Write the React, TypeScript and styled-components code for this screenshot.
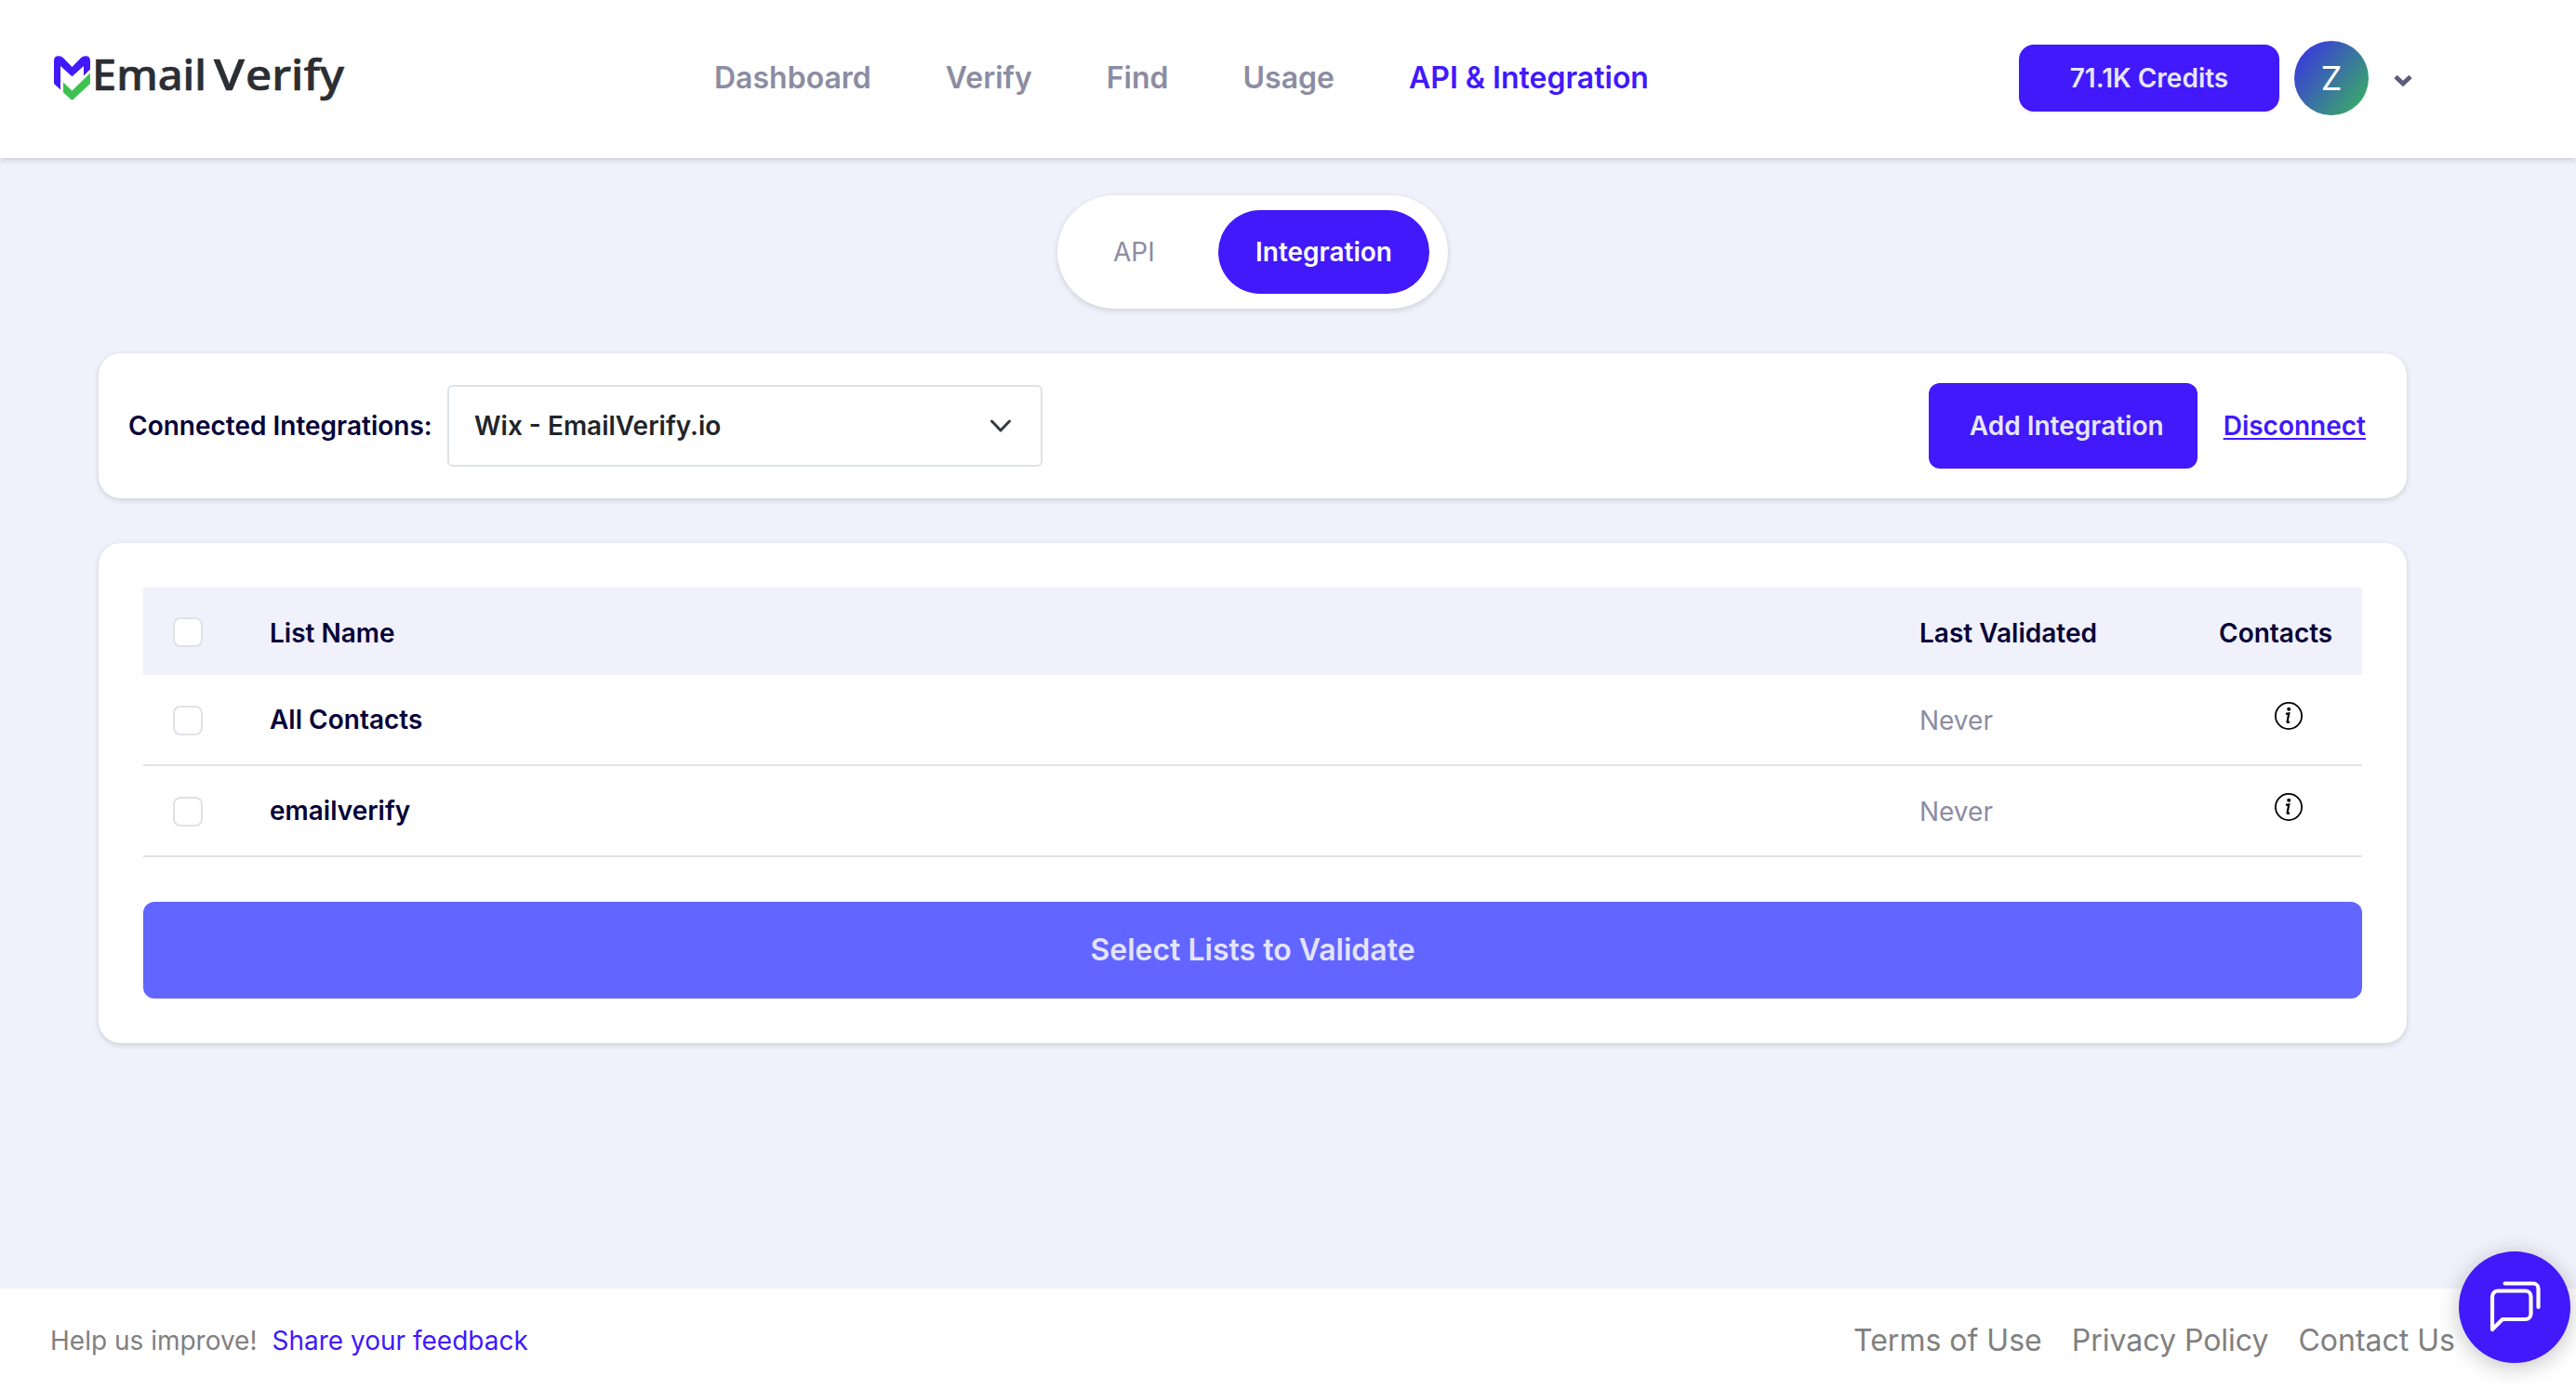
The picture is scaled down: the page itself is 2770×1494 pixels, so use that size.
import React from 'react';
import styled, { createGlobalStyle } from 'styled-components';

const Global = createGlobalStyle`
  * { box-sizing: border-box; }
  body { margin: 0; background: #f1f1fb; font-family: Inter, "Liberation Sans", sans-serif; font-size: 28px; color: #050038; }
  a { color: inherit; text-decoration: none; }
  button { font: inherit; border: 0; }
`;

const brand = '#4119fb';

const Page = styled.div`
  display: flex; flex-direction: column; min-height: 1494px; width: 2770px; background: #f1f1fb;
`;
const Header = styled.header`
  display: flex; align-items: center; height: 170px; padding: 0 175px 2px 58px; background: #fff;
  box-shadow: 0 2px 6px rgba(3, 2, 41, 0.17);
`;
const Logo = styled.svg`display: block; flex: none; width: 330px; height: 80px; margin-right: 380px; overflow: visible;`;
const Nav = styled.nav`display: flex; gap: 80px;`;
const NavLink = styled.a<{ $active?: boolean }>`
  font-size: 32px; line-height: 48px; font-weight: 600; white-space: nowrap;
  color: ${p => (p.$active ? brand : '#8c8ca2')};
`;
const Account = styled.div`display: flex; align-items: center; margin-left: auto;`;
const Chevron = styled.svg`display: block; margin-top: 5px;`;
const Credits = styled.button`
  width: 280px; height: 72px; border-radius: 16px; background: ${brand}; color: #e7e6fb; font-weight: 600;
  box-shadow: 0 2px 4px rgba(67, 24, 255, 0.06);
`;
const Avatar = styled.div`
  display: grid; place-items: center; width: 80px; height: 80px; margin: 0 26px 0 16px; border-radius: 50%;
  background: linear-gradient(128deg, #3a36e0 8%, #3aa76b 88%); color: #fff; font-size: 36px;
`;
const Main = styled.main`
  flex: 1; display: flex; flex-direction: column; align-items: center; padding: 40px 182px 0 106px;
`;
const Toggle = styled.div`
  display: flex; align-items: center; justify-content: space-between; width: 420px; height: 122px; padding: 16px 20px;
  border-radius: 61px; background: #fff; box-shadow: 0 2px 6px rgba(3, 2, 41, 0.15);
`;
const Tab = styled.button<{ $active?: boolean }>`
  height: 90px; padding: 0 40px; border-radius: 45px;
  width: ${p => (p.$active ? '227px' : '124px')};
  background: ${p => (p.$active ? brand : 'transparent')};
  color: ${p => (p.$active ? '#fff' : '#8c8ca2')};
  font-weight: ${p => (p.$active ? 600 : 400)};
`;
const Card = styled.section`
  width: 100%; margin-top: 48px; border-radius: 24px; background: #fff; box-shadow: 0 2px 6px rgba(3, 2, 41, 0.15);
`;
const Toolbar = styled(Card)`display: flex; align-items: center; height: 156px; padding: 0 44px 0 32px;`;
const Label = styled.label`font-weight: 600; white-space: nowrap; width: 343px;`;
const Select = styled.div`
  display: flex; align-items: center; justify-content: space-between; width: 640px; height: 88px; padding: 0 31px 0 27px;
  border: 2px solid #dee2e6; border-radius: 6px; color: #212529; font-weight: 600;
`;
const AddButton = styled.button`
  width: 289px; height: 92px; margin-left: auto; padding: 0 0 0 8px; border-radius: 12px; background: ${brand}; color: #e7e6fb; font-weight: 600;
`;
const Disconnect = styled.a`
  margin-left: 28px; color: ${brand}; font-weight: 600; text-decoration: underline; text-decoration-thickness: 2px; text-underline-offset: 3px;
`;
const ListCard = styled(Card)`height: 538px; padding: 48px;`;
const Row = styled.div<{ $head?: boolean }>`
  display: grid; grid-template-columns: 136px 1fr 322px 154px; align-items: center;
  height: ${p => (p.$head ? '94px' : '98px')};
  background: ${p => (p.$head ? '#f1f1fb' : '#fff')};
  border-bottom: ${p => (p.$head ? '0' : '2px solid #dee2e6')};
`;
const Check = styled.span`
  width: 32px; height: 32px; margin: 2px 0 0 32px; border: 2px solid #dee2e6; border-radius: 8px; background: #fff;
`;
const Strong = styled.span<{ $drop?: number }>`font-weight: 600; padding-top: ${p => p.$drop || 0}px;`;
const Muted = styled.span`color: #8c8ca2; padding-top: 2px;`;
const InfoCell = styled.span`display: flex; padding: 0 0 8px 59px;`;
const Validate = styled.button`
  width: 100%; height: 104px; margin-top: 48px; padding: 0 0 2px; border-radius: 12px; background: #6265ff; color: #e4e3fc; font-size: 32px; font-weight: 600;
`;
const Footer = styled.footer`
  display: flex; align-items: center; justify-content: space-between; height: 108px; padding: 4px 130px 0 54px; background: #fff; color: #808080;
`;
const Feedback = styled.a`color: ${brand}; margin-left: 16px;`;
const Legal = styled.nav`display: flex; gap: 32px; font-size: 32px; padding-bottom: 2px;`;
const Chat = styled.button`
  position: fixed; right: 6px; bottom: 28px; display: grid; place-items: center; width: 120px; height: 120px; padding: 0;
  border-radius: 50%; background: ${brand}; box-shadow: 0 4px 24px rgba(0, 0, 0, 0.24);
`;

const rows = ['All Contacts', 'emailverify'];

const InfoIcon = () => (
  <svg width="32" height="32" viewBox="0 0 32 32">
    <circle cx="16" cy="16" r="14.1" fill="none" stroke="#000" strokeWidth="1.8" />
    <circle cx="16.2" cy="8.800" r="2" fill="#000" />
    <path d="M13 13.900l3.300-.6-1.700 8.800c-.2 1.100.6 1.200 2.300.2" fill="none" stroke="#000" strokeWidth="2.200" />
  </svg>
);

export default function App() {
  return (
    <Page>
      <Global />
      <Header>
        <Logo viewBox="0 -10 330 80">
          <path fill={brand} d="M0 11.500Q0 6.300 5 6.300Q8 6.300 10 8.300L19.500 18L29 8.300Q31 6.300 34 6.300Q39 6.300 39 11.500V20.500L32 27.500V17L19.500 28.300L7 17V42.500L0 36Z" />
          <path fill="#3fc14f" d="M10 34.500L19.500 43.500L39 24.500V36L19.500 54L10 45.500Z" />
          <g fill="#2b2e33" stroke="#2b2e33" strokeWidth="0.7" fontFamily='"Noto Sans", sans-serif' fontSize="46" fontWeight="500">
            <text x="41" y="42.700" textLength="123" lengthAdjust="spacingAndGlyphs">Email</text>
            <text x="172" y="42.700" textLength="33" lengthAdjust="spacingAndGlyphs">V</text>
            <text x="206" y="42.700" textLength="106" lengthAdjust="spacingAndGlyphs">erify</text>
          </g>
        </Logo>
        <Nav>
          <NavLink>Dashboard</NavLink>
          <NavLink>Verify</NavLink>
          <NavLink>Find</NavLink>
          <NavLink>Usage</NavLink>
          <NavLink $active>API &amp; Integration</NavLink>
        </Nav>
        <Account>
          <Credits>71.1K Credits</Credits>
          <Avatar>Z</Avatar>
          <Chevron width="22" height="16" viewBox="0 0 22 16"><path d="M3 3.500l8 7.500 8-7.500" fill="none" stroke="#5b5b7b" strokeWidth="4.800" /></Chevron>
        </Account>
      </Header>
      <Main>
        <Toggle>
          <Tab>API</Tab>
          <Tab $active>Integration</Tab>
        </Toggle>
        <Toolbar>
          <Label>Connected Integrations:</Label>
          <Select>
            Wix - EmailVerify.io
            <svg width="24" height="16" viewBox="0 0 24 16"><path d="M2.500 3l9.500 10 9.500-10" fill="none" stroke="#343a40" strokeWidth="3" strokeLinecap="round" strokeLinejoin="round" /></svg>
          </Select>
          <AddButton>Add Integration</AddButton>
          <Disconnect>Disconnect</Disconnect>
        </Toolbar>
        <ListCard>
          <Row $head>
            <Check /><Strong $drop={3}>List Name</Strong><Strong $drop={3}>Last Validated</Strong><Strong $drop={3}>Contacts</Strong>
          </Row>
          {rows.map(name => (
            <Row key={name}>
              <Check /><Strong>{name}</Strong><Muted>Never</Muted><InfoCell><InfoIcon /></InfoCell>
            </Row>
          ))}
          <Validate>Select Lists to Validate</Validate>
        </ListCard>
      </Main>
      <Footer>
        <div>Help us improve!<Feedback>Share your feedback</Feedback></div>
        <Legal><a>Terms of Use</a><a>Privacy Policy</a><a>Contact Us</a></Legal>
      </Footer>
      <Chat>
        <svg width="60" height="60" viewBox="0 0 60 60" fill="none" stroke="#fff" strokeWidth="4.200" strokeLinecap="round" strokeLinejoin="round">
          <path d="M6 54V18.500a6 6 0 0 1 6-6h29.500a6 6 0 0 1 6 6V37a6 6 0 0 1-6 6H17Z" />
          <path d="M19.500 4.500H50a5.500 5.500 0 0 1 5.500 5.500v20" />
        </svg>
      </Chat>
    </Page>
  );
}
